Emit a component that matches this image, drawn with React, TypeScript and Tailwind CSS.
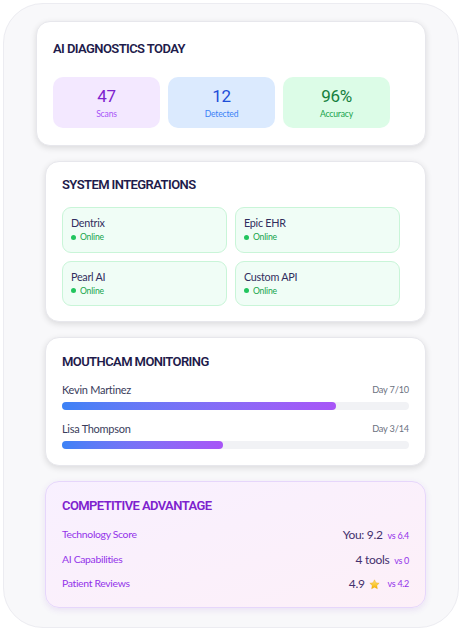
import React from "react";

const heading = "font-['Roboto',sans-serif] font-semibold text-[13px] leading-4 tracking-[-0.045em]";
const card = "rounded-[14px] border px-4 shadow-[0_2px_6px_rgba(0,0,0,0.12)]";

const stats = [
  { value: "47", label: "Scans", box: "bg-[#f3e8ff]", num: "text-[#7e22ce]", sub: "text-[#a855f7]" },
  { value: "12", label: "Detected", box: "bg-[#dbeafe]", num: "text-[#1d4ed8]", sub: "text-[#3b82f6]" },
  { value: "96%", label: "Accuracy", box: "bg-[#dcfce7]", num: "text-[#15803d]", sub: "text-[#16a34a]" },
];

const integrations = ["Dentrix", "Epic EHR", "Pearl AI", "Custom API"];

const patients = [
  { name: "Kevin Martinez", day: "Day 7/10", pct: 79 },
  { name: "Lisa Thompson", day: "Day 3/14", pct: 46.5 },
];

function Star() {
  return (
    <svg width="11" height="11" viewBox="0 0 24 24" className="ml-[4px] mr-[8px]">
      <defs>
        <linearGradient id="star" x1="0" y1="0" x2="0" y2="1">
          <stop offset="0" stopColor="#ffe27a" />
          <stop offset="1" stopColor="#f5b400" />
        </linearGradient>
      </defs>
      <path
        d="M12 1.8l3.1 6.5 7.1.9-5.2 4.9 1.3 7.1L12 17.8l-6.3 3.4 1.3-7.1-5.2-4.9 7.1-.9z"
        fill="url(#star)"
        stroke="#e8a200"
        strokeWidth="0.8"
        strokeLinejoin="round"
      />
    </svg>
  );
}

export default function App() {
  return (
    <div className="w-[462px] h-[631px] bg-white p-[3px] font-['Lato',sans-serif]">
      <div className="h-[625px] w-[456px] rounded-[40px] border border-[#ececf1] bg-[#f8f8fa] pt-[17px] pl-[41px] pr-[32px]">
        <div className="flex flex-col gap-[15px]">
          {/* AI diagnostics */}
          <section className={`${card} -ml-[9px] h-[125px] border-[#e7e7ec] bg-white pt-[19px]`}>
            <h2 className={`${heading} text-[#1e1b4b]`}>AI DIAGNOSTICS TODAY</h2>
            <div className="mt-[20px] flex gap-2">
              {stats.map((s) => (
                <div key={s.label} className={`flex h-[51px] w-[107px] flex-col items-center justify-center rounded-[10px] ${s.box}`}>
                  <div className={`font-['Roboto',sans-serif] text-[17px] leading-[18px] tracking-[-0.02em] ${s.num}`}>{s.value}</div>
                  <div className={`mt-[4px] text-[8.6px] leading-[10px] tracking-[-0.02em] ${s.sub}`}>{s.label}</div>
                </div>
              ))}
            </div>
          </section>

          {/* Integrations */}
          <section className={`${card} h-[161px] border-[#e7e7ec] bg-white pt-[15px]`}>
            <h2 className={`${heading} text-[#1e1b4b]`}>SYSTEM INTEGRATIONS</h2>
            <div className="mt-[14px] grid w-[338px] grid-cols-2 gap-2">
              {integrations.map((name) => (
                <div key={name} className="h-[45.5px] rounded-[9px] border border-[#c9f5d8] bg-[#f0fdf6] px-2 pt-[9px]">
                  <div className="text-[10.8px] leading-3 tracking-[-0.025em] text-[#312e5e]">{name}</div>
                  <div className="mt-[3px] flex items-center gap-[4px] text-[8.6px] leading-[10px] tracking-[-0.02em] text-[#16a34a]">
                    <span className="h-[5px] w-[5px] rounded-full bg-[#22c55e]" />
                    Online
                  </div>
                </div>
              ))}
            </div>
          </section>

          {/* Mouthcam */}
          <section className={`${card} h-[129px] border-[#e7e7ec] bg-white pt-[16px]`}>
            <h2 className={`${heading} text-[#1e1b4b]`}>MOUTHCAM MONITORING</h2>
            <div className="mt-[14px] flex flex-col gap-[13px]">
              {patients.map((p) => (
                <div key={p.name}>
                  <div className="flex items-center justify-between">
                    <span className="text-[11px] leading-3 tracking-[-0.025em] text-[#3a3d5c]">{p.name}</span>
                    <span className="text-[9.2px] leading-3 tracking-[-0.02em] text-[#6b7280]">{p.day}</span>
                  </div>
                  <div className="mt-[6px] h-2 rounded-full bg-[#f1f2f5]">
                    <div
                      className="h-2 rounded-full bg-gradient-to-r from-[#3b82f6] to-[#a855f7]"
                      style={{ width: `${p.pct}%` }}
                    />
                  </div>
                </div>
              ))}
            </div>
          </section>

          {/* Competitive advantage */}
          <section className={`${card} h-[127px] border-[#e6d6fb] bg-gradient-to-br from-[#f8f0ff] to-[#fdf0f8] pt-[16px] shadow-[0_2px_6px_rgba(120,60,200,0.12)]`}>
            <h2 className={`${heading} text-[#7e22ce]`}>COMPETITIVE ADVANTAGE</h2>
            <div className="mt-[13px] flex flex-col gap-[8.5px] tracking-[-0.02em]">
              <div className="flex h-4 items-center justify-between">
                <span className="text-[10.4px] text-[#9333ea]">Technology Score</span>
                <span className="flex items-baseline">
                  <span className="text-[12px] text-[#44306e]">You: 9.2</span>
                  <span className="ml-[5px] text-[9px] text-[#9333ea]">vs 6.4</span>
                </span>
              </div>
              <div className="flex h-4 items-center justify-between">
                <span className="text-[10.4px] text-[#9333ea]">AI Capabilities</span>
                <span className="flex items-baseline">
                  <span className="text-[12px] text-[#44306e]">4 tools</span>
                  <span className="ml-[5px] text-[9px] text-[#9333ea]">vs 0</span>
                </span>
              </div>
              <div className="flex h-4 items-center justify-between">
                <span className="text-[10.4px] text-[#9333ea]">Patient Reviews</span>
                <span className="flex items-center">
                  <span className="text-[12px] text-[#44306e]">4.9</span>
                  <Star />
                  <span className="text-[9px] text-[#9333ea]">vs 4.2</span>
                </span>
              </div>
            </div>
          </section>
        </div>
      </div>
    </div>
  );
}
